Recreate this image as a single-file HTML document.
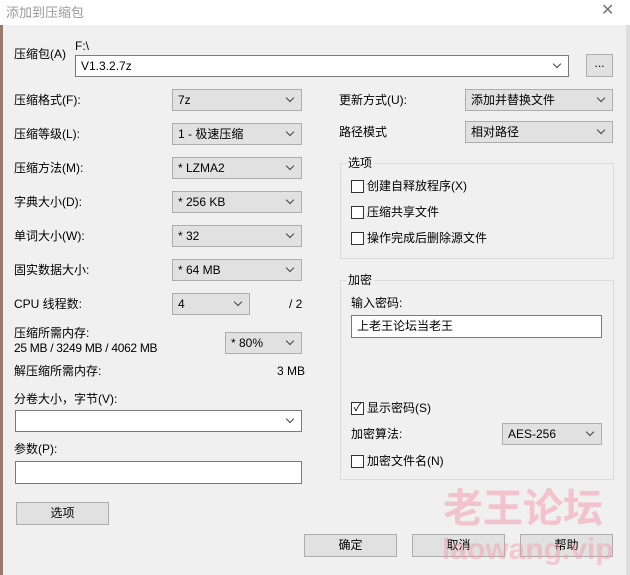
<!DOCTYPE html><html><head><meta charset="utf-8"><style>
body{margin:0;width:630px;height:575px;background:#f0f0f0;position:relative;overflow:hidden;font-family:"Liberation Sans","Microsoft YaHei","Noto Sans CJK SC",sans-serif;font-size:12px;color:#000}
.a{position:absolute;white-space:nowrap;line-height:14px}
.t{position:absolute;left:0;top:0;width:630px;height:25px;background:#fff}
.cb{position:absolute;height:20px;border:1px solid #adadad;background:#e1e1e1;box-sizing:border-box;height:22px;padding-left:5px;line-height:20px}
.cb.w{background:#fff;border-color:#7a7a7a}
.cb:after{content:"";position:absolute;right:8px;top:5px;width:5px;height:5px;border-right:1px solid #444;border-bottom:1px solid #444;transform:rotate(45deg)}
.in{position:absolute;background:#fff;border:1px solid #7a7a7a;box-sizing:border-box;padding-left:5px;line-height:20px}
.bt{position:absolute;background:#e1e1e1;border:1px solid #adadad;box-sizing:border-box;text-align:center;line-height:21px;height:23px}
.g{position:absolute;border:1px solid #dcdcdc;box-sizing:border-box}
.lg{position:absolute;background:#f0f0f0;padding:0 2px;line-height:14px}
.ck{position:absolute;width:13px;height:13px;border:1px solid #333;box-sizing:border-box;background:#fff}
</style></head><body>
<div style="position:absolute;left:0;top:0;width:3px;height:575px;background:#9a7a6a"></div>
<div style="position:absolute;right:0;top:0;width:4px;height:575px;background:#ddd"></div>
<div class="t"></div>
<div class="a" style="left:6px;top:6px;color:#999;font-size:13px">添加到压缩包</div>
<div class="a" style="left:601px;top:4px;color:#777;font-size:16px">✕</div>
<div class="a" style="left:14px;top:47px">压缩包(A)</div>
<div class="a" style="left:75px;top:39px">F:\</div>
<div class="cb w" style="left:75px;top:55px;width:494px">V1.3.2.7z</div>
<div class="bt" style="left:586px;top:54px;width:27px;line-height:17px">...</div>

<div class="a" style="left:14px;top:93px">压缩格式(F):</div>
<div class="cb" style="left:172px;top:89px;width:130px">7z</div>
<div class="a" style="left:14px;top:127px">压缩等级(L):</div>
<div class="cb" style="left:172px;top:123px;width:130px">1 - 极速压缩</div>
<div class="a" style="left:14px;top:161px">压缩方法(M):</div>
<div class="cb" style="left:172px;top:157px;width:130px">* LZMA2</div>
<div class="a" style="left:14px;top:195px">字典大小(D):</div>
<div class="cb" style="left:172px;top:191px;width:130px">* 256 KB</div>
<div class="a" style="left:14px;top:229px">单词大小(W):</div>
<div class="cb" style="left:172px;top:225px;width:130px">* 32</div>
<div class="a" style="left:14px;top:263px">固实数据大小:</div>
<div class="cb" style="left:172px;top:259px;width:130px">* 64 MB</div>
<div class="a" style="left:14px;top:297px">CPU 线程数:</div>
<div class="cb" style="left:172px;top:293px;width:78px">4</div>
<div class="a" style="left:289px;top:297px">/ 2</div>
<div class="a" style="left:14px;top:326px">压缩所需内存:</div>
<div class="a" style="left:14px;top:341px;letter-spacing:-0.3px">25 MB / 3249 MB / 4062 MB</div>
<div class="cb" style="left:225px;top:332px;width:77px">* 80%</div>
<div class="a" style="left:14px;top:364px">解压缩所需内存:</div>
<div class="a" style="left:277px;top:364px">3 MB</div>
<div class="a" style="left:14px;top:392px">分卷大小，字节(V):</div>
<div class="cb w" style="left:15px;top:410px;width:287px"></div>
<div class="a" style="left:14px;top:442px">参数(P):</div>
<div class="in" style="left:15px;top:461px;width:287px;height:23px"></div>
<div class="bt" style="left:16px;top:502px;width:93px">选项</div>

<div class="a" style="left:339px;top:93px">更新方式(U):</div>
<div class="cb" style="left:465px;top:89px;width:148px">添加并替换文件</div>
<div class="a" style="left:339px;top:125px">路径模式</div>
<div class="cb" style="left:465px;top:121px;width:148px">相对路径</div>

<div class="g" style="left:340px;top:163px;width:274px;height:96px"></div>
<div class="lg" style="left:346px;top:156px">选项</div>
<div class="ck" style="left:351px;top:180px"></div><div class="a" style="left:367px;top:179px">创建自释放程序(X)</div>
<div class="ck" style="left:351px;top:206px"></div><div class="a" style="left:367px;top:205px">压缩共享文件</div>
<div class="ck" style="left:351px;top:232px"></div><div class="a" style="left:367px;top:231px">操作完成后删除源文件</div>

<div class="g" style="left:340px;top:280px;width:274px;height:200px"></div>
<div class="lg" style="left:346px;top:273px">加密</div>
<div class="a" style="left:351px;top:296px">输入密码:</div>
<div class="in" style="left:351px;top:315px;width:251px;height:23px">上老王论坛当老王</div>
<div class="ck" style="left:351px;top:402px;text-align:center;line-height:10px;font-size:11px">✓</div><div class="a" style="left:367px;top:401px">显示密码(S)</div>
<div class="a" style="left:351px;top:427px">加密算法:</div>
<div class="cb" style="left:502px;top:423px;width:100px">AES-256</div>
<div class="ck" style="left:351px;top:455px"></div><div class="a" style="left:367px;top:454px">加密文件名(N)</div>

<div class="bt" style="left:304px;top:534px;width:93px">确定</div>
<div class="bt" style="left:412px;top:534px;width:93px">取消</div>
<div class="bt" style="left:520px;top:534px;width:93px">帮助</div>
<div class="a" style="left:443px;top:486px;font-size:40px;line-height:46px;color:rgba(245,150,170,0.5);font-weight:bold">老王论坛</div>
<div class="a" style="left:442px;top:532px;font-size:30px;line-height:36px;color:rgba(245,150,170,0.45);font-weight:bold">laowang.vip</div>
</body></html>
